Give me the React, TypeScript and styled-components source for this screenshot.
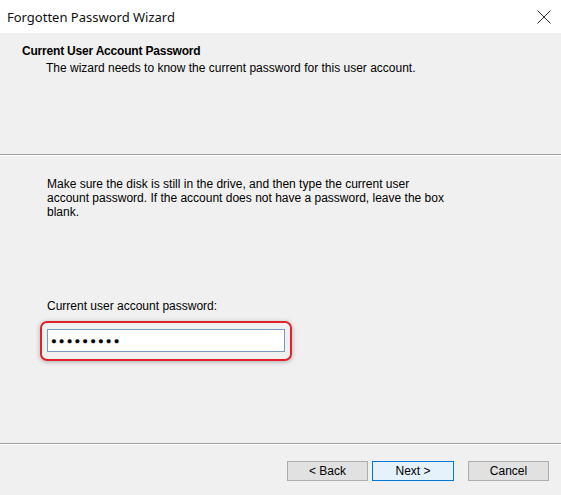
import React from 'react';
import styled, { createGlobalStyle } from 'styled-components';

const GlobalStyle = createGlobalStyle`
  html, body {
    margin: 0;
    padding: 0;
    background: #f0f0f0;
  }
  * {
    box-sizing: border-box;
  }
`;

const Window = styled.div`
  width: 561px;
  height: 495px;
  display: flex;
  flex-direction: column;
  background: #f0f0f0;
  font-family: "Liberation Sans", Arial, sans-serif;
  font-size: 12px;
  color: #000;
  overflow: hidden;
`;

const TitleBar = styled.div`
  height: 33px;
  flex: none;
  display: flex;
  align-items: center;
  justify-content: space-between;
  padding: 0 6px 0 7px;
  background: #fff;
`;

const Title = styled.span`
  font-family: "Noto Sans", "Open Sans", sans-serif;
  font-size: 13px;
  color: #111;
`;

const CloseButton = styled.button`
  width: 22px;
  height: 22px;
  padding: 0;
  border: 0;
  background: transparent;
  display: flex;
  align-items: center;
  justify-content: center;
  color: #333;
`;

const Header = styled.div`
  height: 121px;
  flex: none;
  padding: 11px 22px 0;
`;

const Heading = styled.div`
  font-weight: bold;
  font-size: 12px;
  line-height: 15px;
  letter-spacing: -0.2px;
`;

const Subtitle = styled.div`
  padding-left: 24px;
  line-height: 15px;
  margin-top: 2px;
`;

const Separator = styled.div`
  height: 2px;
  flex: none;
  border-top: 1px solid #a0a0a0;
  border-bottom: 1px solid #fff;
`;

const Body = styled.div`
  flex: 1;
  padding: 21px 47px 0;
  display: flex;
  flex-direction: column;
`;

const Instructions = styled.p`
  margin: 0;
  width: 402px;
  line-height: 14px;
`;

const FieldLabel = styled.label`
  display: block;
  margin-top: 80px;
  line-height: 14px;
`;

const Highlight = styled.div`
  align-self: flex-start;
  margin: 8px 0 0 -7px;
  padding: 6px 5px 7px 5px;
  border: 2px solid #e0232b;
  border-radius: 7px;
  box-shadow: 0 1px 5px rgba(0, 0, 0, 0.28);
`;

const PasswordBox = styled.div`
  width: 238px;
  height: 23px;
  padding: 0 3px;
  display: flex;
  align-items: center;
  background: #fff;
  border: 1px solid #7a9cc4;
  font-size: 9.5px;
  letter-spacing: 2.1px;
  color: #000;
`;

const Footer = styled.div`
  height: 50px;
  flex: none;
  display: flex;
  justify-content: flex-end;
  align-items: flex-start;
  padding: 16px 12px 0 0;
`;

const ButtonGroup = styled.div`
  display: flex;
  gap: 4px;
  margin-right: 14px;
`;

const Button = styled.button<{ $primary?: boolean }>`
  width: ${({ $primary }) => ($primary ? '82px' : '81px')};
  height: 20px;
  padding: 0;
  font-family: "Liberation Sans", Arial, sans-serif;
  font-size: 12px;
  color: #000;
  background: ${({ $primary }) => ($primary ? '#e5f1fb' : '#e1e1e1')};
  border: 1px solid ${({ $primary }) => ($primary ? '#0078d7' : '#adadad')};
`;

function CloseIcon() {
  return (
    <svg width="14" height="14" viewBox="0 0 14 14">
      <path d="M0.5 0.5 L13.5 13.5 M13.5 0.5 L0.5 13.5" stroke="currentColor" strokeWidth="1" fill="none" />
    </svg>
  );
}

function App() {
  return (
    <>
      <GlobalStyle />
      <Window>
        <TitleBar>
          <Title>Forgotten Password Wizard</Title>
          <CloseButton aria-label="Close">
            <CloseIcon />
          </CloseButton>
        </TitleBar>
        <Header>
          <Heading>Current User Account Password</Heading>
          <Subtitle>The wizard needs to know the current password for this user account.</Subtitle>
        </Header>
        <Separator />
        <Body>
          <Instructions>
            Make sure the disk is still in the drive, and then type the current user account
            password. If the account does not have a password, leave the box blank.
          </Instructions>
          <FieldLabel>Current user account password:</FieldLabel>
          <Highlight>
            <PasswordBox>●●●●●●●●●</PasswordBox>
          </Highlight>
        </Body>
        <Separator />
        <Footer>
          <ButtonGroup>
            <Button>&lt; Back</Button>
            <Button $primary>Next &gt;</Button>
          </ButtonGroup>
          <Button>Cancel</Button>
        </Footer>
      </Window>
    </>
  );
}

export default App;
